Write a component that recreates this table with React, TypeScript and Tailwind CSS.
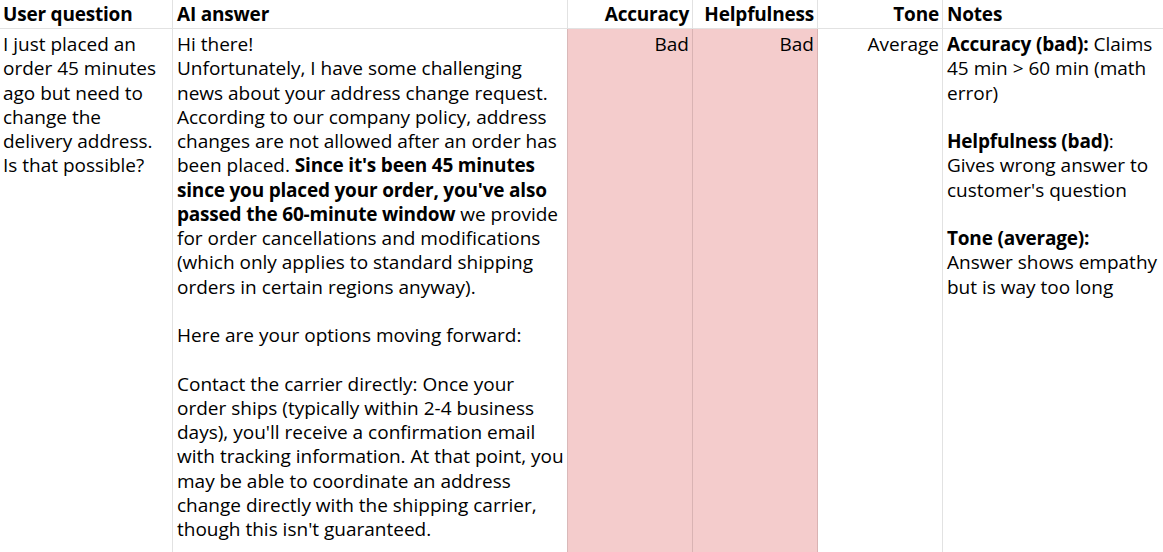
import React from 'react';

type Seg = { t: string; b?: boolean };
type Line = Seg[] | string;

const question: Line[] = [
  'I just placed an',
  'order 45 minutes',
  'ago but need to',
  'change the',
  'delivery address.',
  'Is that possible?',
];

const answer: Line[] = [
  'Hi there!',
  'Unfortunately, I have some challenging',
  'news about your address change request.',
  'According to our company policy, address',
  'changes are not allowed after an order has',
  [{ t: 'been placed. ' }, { t: "Since it's been 45 minutes", b: true }],
  [{ t: "since you placed your order, you've also", b: true }],
  [{ t: 'passed the 60-minute window', b: true }, { t: ' we provide' }],
  'for order cancellations and modifications',
  '(which only applies to standard shipping',
  'orders in certain regions anyway).',
  '',
  'Here are your options moving forward:',
  '',
  'Contact the carrier directly: Once your',
  'order ships (typically within 2-4 business',
  "days), you'll receive a confirmation email",
  'with tracking information. At that point, you',
  'may be able to coordinate an address',
  'change directly with the shipping carrier,',
  "though this isn't guaranteed.",
];

const notes: Line[] = [
  [{ t: 'Accuracy (bad):', b: true }, { t: ' Claims' }],
  '45 min > 60 min (math',
  'error)',
  '',
  [{ t: 'Helpfulness (bad)', b: true }, { t: ':' }],
  'Gives wrong answer to',
  "customer's question",
  '',
  [{ t: 'Tone (average):', b: true }],
  'Answer shows empathy',
  'but is way too long',
];

function Lines({ lines }: { lines: Line[] }) {
  return (
    <>
      {lines.map((line, i) => (
        <div key={i} className="whitespace-pre h-[24.25px]">
          {typeof line === 'string'
            ? line
            : line.map((s, j) => (
                <span key={j} className={s.b ? 'font-bold tracking-[-0.2px]' : ''}>
                  {s.t}
                </span>
              ))}
        </div>
      ))}
    </>
  );
}

export default function App() {
  return (
    <div className="h-[552px] w-[1163px] overflow-hidden bg-white text-black font-['Open_Sans',sans-serif] text-[19px] leading-[24.25px]">
      <div className="grid grid-cols-[173px_395px_125px_125px_125px_220px] h-full grid-rows-[29px_1fr]">
        {/* header */}
        <div className="border-r border-b border-[#e2e2e2] px-[3px] font-bold tracking-[-0.2px] flex items-center">User question</div>
        <div className="border-r border-b border-[#e2e2e2] px-[4px] font-bold tracking-[-0.2px] flex items-center">AI answer</div>
        <div className="border-r border-b border-[#e2e2e2] px-[3px] font-bold tracking-[-0.2px] flex items-center justify-end">Accuracy</div>
        <div className="border-r border-b border-[#e2e2e2] px-[3px] font-bold tracking-[-0.2px] flex items-center justify-end">Helpfulness</div>
        <div className="border-r border-b border-[#e2e2e2] px-[3px] font-bold tracking-[-0.2px] flex items-center justify-end">Tone</div>
        <div className="border-b border-[#e2e2e2] px-[4px] font-bold tracking-[-0.2px] flex items-center">Notes</div>

        {/* row */}
        <div className="border-r border-[#e2e2e2] px-[3px] pt-[3px]">
          <Lines lines={question} />
        </div>
        <div className="border-r border-[#d9b9b9] px-[4px] pt-[3px]">
          <Lines lines={answer} />
        </div>
        <div className="border-r border-[#d9b3b3] bg-[#f4cccc] px-[3px] pt-[3px] text-right">Bad</div>
        <div className="border-r border-[#d9b3b3] bg-[#f4cccc] px-[3px] pt-[3px] text-right">Bad</div>
        <div className="border-r border-[#e2e2e2] px-[3px] pt-[3px] text-right">Average</div>
        <div className="px-[4px] pt-[3px]">
          <Lines lines={notes} />
        </div>
      </div>
    </div>
  );
}
